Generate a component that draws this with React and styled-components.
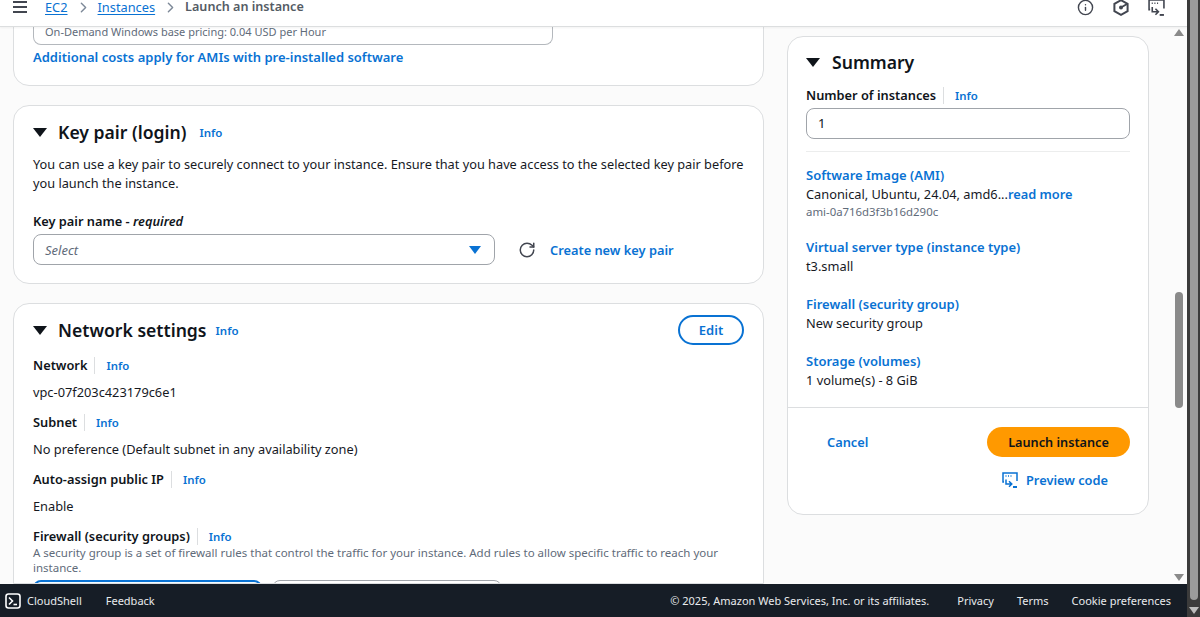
import React from 'react'
import styled, { createGlobalStyle } from 'styled-components'
import { ChevronRight, Info as InfoCircle, RotateCw } from 'lucide-react'

const Global = createGlobalStyle`
  html, body { margin: 0; padding: 0; height: 100%; overflow: hidden; }
  body { font-family: "Noto Sans", "Open Sans", sans-serif; font-size: 12.8px; color: #0f141a; background: #fff; }
`

const Frame = styled.div`
  display: flex;
  width: 1200px;
  height: 617px;
  overflow: hidden;
`
const Page = styled.div`
  width: 1187px;
  display: flex;
  flex-direction: column;
`
const TopBar = styled.header`
  height: 27px;
  box-sizing: border-box;
  flex: none;
  display: flex;
  align-items: center;
  padding: 0 22px 12px 13px;
  background: #fff;
  border-bottom: 1px solid #dcdedf;
  box-shadow: 0 1px 2px rgba(0, 0, 0, 0.05);
  z-index: 1;
`
const Burger = styled.span`
  display: flex;
  flex-direction: column;
  gap: 3px;
  width: 14px;
  margin-right: 18px;
  span { height: 2px; background: #424650; }
`
const Crumb = styled.a`
  color: #0972d3;
  font-size: 12.8px;
  line-height: 14px;
  text-decoration: underline;
  text-underline-offset: 2px;
`
const Current = styled.span`
  color: #545b64;
  font-weight: 600;
  font-size: 12.6px;
  line-height: 14px;
`
const Sep = styled(ChevronRight)`
  color: #7d8998;
  margin: 0 6px 0 7px;
`
const TopIcons = styled.div`
  margin-left: auto;
  display: flex;
  align-items: center;
  gap: 19px;
  color: #424650;
`
const Body = styled.div`
  flex: 1;
  min-height: 0;
  display: flex;
  background: #fbfbfb;
  overflow: hidden;
`
const Left = styled.div`
  width: 751px;
  margin: -40px 0 0 13px;
  display: flex;
  flex-direction: column;
  gap: 19px;
  flex: none;
`
const Card = styled.section`
  background: #fff;
  border: 1px solid #dcdee0;
  border-radius: 16px;
  box-sizing: border-box;
  padding: ${p => p.$pad || '0 19px'};
  height: ${p => p.$h}px;
  flex: none;
  overflow: hidden;
`
const OpenCard = styled(Card)`
  border-bottom-left-radius: 0;
  border-bottom-right-radius: 0;
  flex: 1;
`
const PriceBox = styled.div`
  margin-top: 31px;
  width: 520px;
  height: 26px;
  border: 1px solid #b4b8bd;
  border-radius: 0 0 8px 8px;
  border-top: none;
  box-sizing: border-box;
  padding: 0 11px;
  font-size: 11px;
  line-height: 26px;
  color: #5f6b7a;
`
const BoldLink = styled.a`
  color: #0972d3;
  font-weight: 600;
  font-size: ${p => p.$size || 12.8}px;
  line-height: 20px;
`
const AmiNote = styled.div`
  margin-top: 2px;
`
const Heading = styled.div`
  display: flex;
  align-items: center;
  height: 24px;
  margin-top: ${p => p.$top || 0}px;
`
const Caret = styled.span`
  width: 0;
  height: 0;
  border-left: 7px solid transparent;
  border-right: 7px solid transparent;
  border-top: 9px solid #0f141a;
  margin-right: ${p => p.$gap || 11}px;
  flex: none;
`
const Title = styled.h2`
  margin: 0;
  font-size: 17.6px;
  font-weight: 600;
  color: #0f141a;
  line-height: 24px;
`
const InfoLink = styled.a`
  color: #0972d3;
  font-weight: 600;
  font-size: 11.5px;
  margin-left: ${p => p.$gap || 9}px;
  line-height: 16px;
  padding-top: 2px;
`
const Copy = styled.p`
  margin: 11px -12px 0 0;
  font-size: 12.75px;
  line-height: 19px;
  color: #16191f;
`
const FieldName = styled.div`
  margin-top: 18px;
  font-size: 12.8px;
  font-weight: 600;
  line-height: 20px;
  em { font-weight: 600; }
`
const SelectRow = styled.div`
  display: flex;
  align-items: center;
  margin-top: 3px;
`
const SelectBox = styled.div`
  width: 462px;
  height: 31px;
  box-sizing: border-box;
  border: 1px solid #a0a4aa;
  border-radius: 8px;
  display: flex;
  align-items: center;
  justify-content: space-between;
  padding: 0 13px 0 11px;
  font-style: italic;
  font-size: 13px;
  line-height: 28px;
  color: #5f6b7a;
`
const BlueCaret = styled.span`
  width: 0;
  height: 0;
  border-left: 6px solid transparent;
  border-right: 6px solid transparent;
  border-top: 8px solid #0972d3;
`
const Refresh = styled(RotateCw)`
  color: #424650;
  margin: 0 14px 0 23px;
`
const NetworkHead = styled(Heading)`
  justify-content: space-between;
  margin-top: 10px;
  height: 32px;
`
const HeadLeft = styled.div`
  display: flex;
  align-items: center;
`
const EditButton = styled.button`
  width: 66px;
  height: 30px;
  border: 2px solid #0972d3;
  border-radius: 15px;
  background: #fff;
  color: #0972d3;
  font: 600 13px "Noto Sans", sans-serif;
  padding: 0;
`
const Field = styled.div`
  margin-top: ${p => p.$top ?? 10}px;
`
const LabelRow = styled.div`
  display: flex;
  align-items: center;
  font-size: 12.8px;
  font-weight: 600;
  line-height: 20px;
`
const LabelInfo = styled.a`
  color: #0972d3;
  font-size: 11.4px;
  font-weight: 600;
  margin-left: 7px;
  padding-left: 11px;
  border-left: 1px solid #dcdee0;
  line-height: 17px;
`
const Value = styled.div`
  font-size: 12.8px;
  line-height: 20px;
  margin-top: 7px;
  color: #16191f;
`
const Hint = styled.div`
  font-size: 11.5px;
  line-height: 15px;
  color: #5f6b7a;
  margin-top: -1px;
`
const Tabs = styled.div`
  display: flex;
  gap: 10px;
  margin-top: 5px;
`
const TabBox = styled.div`
  width: ${p => p.$w}px;
  height: 30px;
  box-sizing: border-box;
  border: ${p => (p.$on ? '2px solid #0972d3' : '1px solid #a0a4aa')};
  background: ${p => (p.$on ? '#f0fbff' : '#fff')};
  border-radius: 8px;
`
const Summary = styled(Card)`
  width: 362px;
  margin: 9px 0 0 23px;
  padding: 0;
`
const SummaryTop = styled.div`
  padding: 13px 18px 0 18px;
  height: 371px;
  box-sizing: border-box;
  border-bottom: 1px solid #dcdee0;
`
const NumberInput = styled.div`
  height: 31px;
  margin-top: 3px;
  box-sizing: border-box;
  border: 1px solid #a0a4aa;
  border-radius: 8px;
  padding: 0 11px;
  line-height: 29px;
  font-size: 13px;
`
const Rule = styled.div`
  height: 1px;
  background: #eceded;
  margin: 12px 0 14px;
`
const SummaryItem = styled.div`
  margin-bottom: 19px;
  line-height: 19px;
  font-size: 12.8px;
  color: #16191f;
`
const ItemLink = styled.a`
  display: block;
  color: #0972d3;
  font-weight: 600;
  font-size: 13px;
  line-height: 19px;
`
const ReadMore = styled(BoldLink)`
  line-height: 19px;
`
const AmiId = styled.div`
  font-size: 11.4px;
  color: #5f6b7a;
  line-height: 15px;
`
const Actions = styled.div`
  display: flex;
  justify-content: space-between;
  padding: 19px 18px 0 39px;
`
const ActionColumn = styled.div`
  display: flex;
  flex-direction: column;
  align-items: flex-end;
`
const CancelLink = styled(BoldLink)`
  line-height: 30px;
`
const LaunchButton = styled.button`
  width: 143px;
  height: 30px;
  border: none;
  border-radius: 15px;
  background: #ff9900;
  color: #0f141a;
  font: 600 12.7px "Noto Sans", sans-serif;
  padding: 0;
`
const Preview = styled.a`
  display: flex;
  align-items: center;
  gap: 8px;
  margin: 14px 22px 0 0;
  color: #0972d3;
  font-weight: 600;
  font-size: 12.8px;
  line-height: 18px;
`
const Track = styled.div`
  position: relative;
  margin-left: auto;
  width: 15px;
  flex: none;
  background: #fbfbfb;
`
const Thumb = styled.div`
  position: absolute;
  left: 3px;
  top: 265px;
  width: 8px;
  height: 116px;
  border-radius: 4px;
  background: #8a8a8a;
`
const Arrow = styled.span`
  position: absolute;
  left: 2px;
  width: 0;
  height: 0;
  border-left: 5px solid transparent;
  border-right: 5px solid transparent;
  ${p => (p.$up ? 'top: 2px; border-bottom: 7px solid #8a8a8a;' : 'bottom: 3px; border-top: 7px solid #8a8a8a;')}
`
const Footer = styled.footer`
  height: 33px;
  flex: none;
  background: #161d26;
  color: #e9ebed;
  display: flex;
  align-items: center;
  font-size: 11px;
  padding: 0 16px 0 5px;
`
const ShellName = styled.span`
  margin-left: 6px;
  margin-right: 24px;
`
const FootRight = styled.div`
  margin-left: auto;
  display: flex;
  gap: 23px;
`
const Copyright = styled.span`
  margin-right: 5px;
`
const OuterBar = styled.div`
  position: relative;
  width: 13px;
  flex: none;
  background: #3b3b3b;
`
const OuterThumb = styled.div`
  position: absolute;
  left: 3px;
  top: 0;
  width: 8px;
  height: 600px;
  border-radius: 0 0 4px 4px;
  background: #9b9b9b;
`
const OuterArrow = styled.span`
  position: absolute;
  left: 2px;
  bottom: 3px;
  width: 0;
  height: 0;
  border-left: 5px solid transparent;
  border-right: 5px solid transparent;
  border-top: 7px solid #bdbdbd;
`

const HexIcon = () => (
  <svg width="16" height="17" viewBox="0 0 16 17" fill="none" stroke="currentColor" strokeWidth="2">
    <path d="M8 1.2 14.6 4.8v7.4L8 15.8 1.4 12.2V4.8Z" />
    <circle cx="8" cy="8.5" r="2" fill="currentColor" stroke="none" />
    <path d="M8 8.5 14 5" />
  </svg>
)

const CodeIcon = ({ size = 16 }) => (
  <svg width={size} height={size} viewBox="0 0 16 16" fill="none" stroke="currentColor" strokeWidth="1.5">
    <path d="M2 10H1V1h14v8" />
    <path d="M3.5 4h1M6 4h1M8.5 4h1" strokeWidth="1.6" />
    <path d="M4 7.5V12h5.5M7 9.2 9.8 12 7 14.8" />
    <path d="M11 15h4" strokeWidth="1.8" />
  </svg>
)

const ShellIcon = () => (
  <svg width="16" height="16" viewBox="0 0 16 16" fill="none" stroke="#fff" strokeWidth="1.6">
    <rect x="1" y="1" width="14" height="14" rx="2.5" />
    <path d="m4 4.5 3.5 3.5L4 11.5" />
    <path d="M8.5 11.5H12" />
  </svg>
)

const Label = ({ name }) => (
  <LabelRow>
    {name}
    <LabelInfo>Info</LabelInfo>
  </LabelRow>
)

export default function App() {
  return (
    <Frame>
      <Global />
      <Page>
        <TopBar>
          <Burger><span /><span /><span /></Burger>
          <Crumb>EC2</Crumb>
          <Sep size={17} />
          <Crumb>Instances</Crumb>
          <Sep size={17} />
          <Current>Launch an instance</Current>
          <TopIcons>
            <InfoCircle size={17} strokeWidth={2} />
            <HexIcon />
            <CodeIcon size={17} />
          </TopIcons>
        </TopBar>
        <Body>
          <Left>
            <Card $h={99}>
              <PriceBox>On-Demand Windows base pricing: 0.04 USD per Hour</PriceBox>
              <AmiNote><BoldLink $size={13}>Additional costs apply for AMIs with pre-installed software</BoldLink></AmiNote>
            </Card>
            <Card $h={179} $pad="14px 19px 0">
              <Heading>
                <Caret />
                <Title>Key pair (login)</Title>
                <InfoLink $gap={13}>Info</InfoLink>
              </Heading>
              <Copy>You can use a key pair to securely connect to your instance. Ensure that you have access to the selected key pair before you launch the instance.</Copy>
              <FieldName>Key pair name - <em>required</em></FieldName>
              <SelectRow>
                <SelectBox>Select<BlueCaret /></SelectBox>
                <Refresh size={18} strokeWidth={2} />
                <BoldLink>Create new key pair</BoldLink>
              </SelectRow>
            </Card>
            <OpenCard>
              <NetworkHead>
                <HeadLeft>
                  <Caret />
                  <Title>Network settings</Title>
                  <InfoLink>Info</InfoLink>
                </HeadLeft>
                <EditButton>Edit</EditButton>
              </NetworkHead>
              <Field $top={9}>
                <Label name="Network" />
                <Value>vpc-07f203c423179c6e1</Value>
              </Field>
              <Field>
                <Label name="Subnet" />
                <Value>No preference (Default subnet in any availability zone)</Value>
              </Field>
              <Field>
                <Label name="Auto-assign public IP" />
                <Value>Enable</Value>
              </Field>
              <Field>
                <Label name="Firewall (security groups)" />
                <Hint>A security group is a set of firewall rules that control the traffic for your instance. Add rules to allow specific traffic to reach your instance.</Hint>
                <Tabs>
                  <TabBox $w={229} $on />
                  <TabBox $w={230} />
                </Tabs>
              </Field>
            </OpenCard>
          </Left>
          <Summary $h={479}>
            <SummaryTop>
              <Heading>
                <Caret $gap={12} />
                <Title>Summary</Title>
              </Heading>
              <Field $top={11}>
                <Label name="Number of instances" />
                <NumberInput>1</NumberInput>
              </Field>
              <Rule />
              <SummaryItem>
                <ItemLink>Software Image (AMI)</ItemLink>
                Canonical, Ubuntu, 24.04, amd6...<ReadMore>read more</ReadMore>
                <AmiId>ami-0a716d3f3b16d290c</AmiId>
              </SummaryItem>
              <SummaryItem>
                <ItemLink>Virtual server type (instance type)</ItemLink>
                t3.small
              </SummaryItem>
              <SummaryItem>
                <ItemLink>Firewall (security group)</ItemLink>
                New security group
              </SummaryItem>
              <SummaryItem>
                <ItemLink>Storage (volumes)</ItemLink>
                1 volume(s) - 8 GiB
              </SummaryItem>
            </SummaryTop>
            <Actions>
              <CancelLink>Cancel</CancelLink>
              <ActionColumn>
                <LaunchButton>Launch instance</LaunchButton>
                <Preview><CodeIcon />Preview code</Preview>
              </ActionColumn>
            </Actions>
          </Summary>
          <Track>
            <Arrow $up />
            <Thumb />
            <Arrow />
          </Track>
        </Body>
        <Footer>
          <ShellIcon />
          <ShellName>CloudShell</ShellName>
          <span>Feedback</span>
          <FootRight>
            <Copyright>© 2025, Amazon Web Services, Inc. or its affiliates.</Copyright>
            <span>Privacy</span>
            <span>Terms</span>
            <span>Cookie preferences</span>
          </FootRight>
        </Footer>
      </Page>
      <OuterBar>
        <OuterThumb />
        <OuterArrow />
      </OuterBar>
    </Frame>
  )
}
